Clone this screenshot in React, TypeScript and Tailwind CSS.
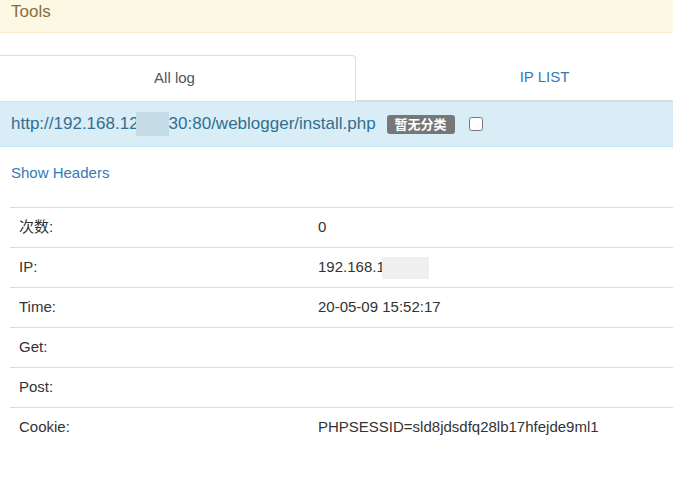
const rows: { label: string; value: React.ReactNode }[] = [
  { label: '次数:', value: '0' },
  {
    label: 'IP:',
    value: (
      <span className="inline-flex items-center">
        192.168.1
        <span className="ml-[-3px] inline-block h-[22px] w-[47px] bg-[#efefef]" />
      </span>
    ),
  },
  { label: 'Time:', value: '20-05-09 15:52:17' },
  { label: 'Get:', value: '' },
  { label: 'Post:', value: '' },
  { label: 'Cookie:', value: 'PHPSESSID=sld8jdsdfq28lb17hfejde9ml1' },
]

export default function App() {
  return (
    <div className="min-h-[481px] w-full bg-white font-['Liberation_Sans','Noto_Sans_CJK_SC',sans-serif] text-[#333]">
      <div className="flex h-[33px] items-center border-b border-[#faebcc] bg-[#fcf8e3] pb-[9px] pl-[11px] text-[17px] text-[#8a6d3b]">
        Tools
      </div>

      <div className="mt-[22px] flex h-[46px]">
        <div className="flex w-[356px] items-center justify-center rounded-tr-[4px] border-t border-r border-[#ddd] pr-[6px] text-[15px] text-[#555]">
          All log
        </div>
        <div className="flex flex-1 items-center justify-center border-b border-[#ddd] pl-[60px] text-[15px] text-[#337ab7]">
          IP LIST
        </div>
      </div>

      <div className="flex h-[46px] items-center border-y border-[#bce8f1] bg-[#d9edf7] pl-[11px] text-[17px] text-[#31708f]">
        <span className="inline-flex items-center">
          http://192.168.12
          <span className="ml-[-3px] inline-block h-[24px] w-[33px] bg-[#c5dce7]" />
          30:80/weblogger/install.php
        </span>
        <span className="ml-[11px] rounded-[3px] bg-[#777] px-[8px] py-[1px] text-[13px] font-bold leading-[17px] text-white">
          暂无分类
        </span>
        <input type="checkbox" className="ml-[14px] h-[14px] w-[14px]" />
      </div>

      <div className="pl-[11px] pt-[16px] text-[15px] leading-[20px] text-[#337ab7]">Show Headers</div>

      <div className="ml-[10px] mt-[24px]">
        {rows.map((r) => (
          <div key={r.label} className="grid h-[40px] grid-cols-[299px_1fr] items-center border-t border-[#ddd] text-[15px]">
            <div className="pl-[9px]">{r.label}</div>
            <div className="pl-[9px]">{r.value}</div>
          </div>
        ))}
      </div>
    </div>
  )
}
